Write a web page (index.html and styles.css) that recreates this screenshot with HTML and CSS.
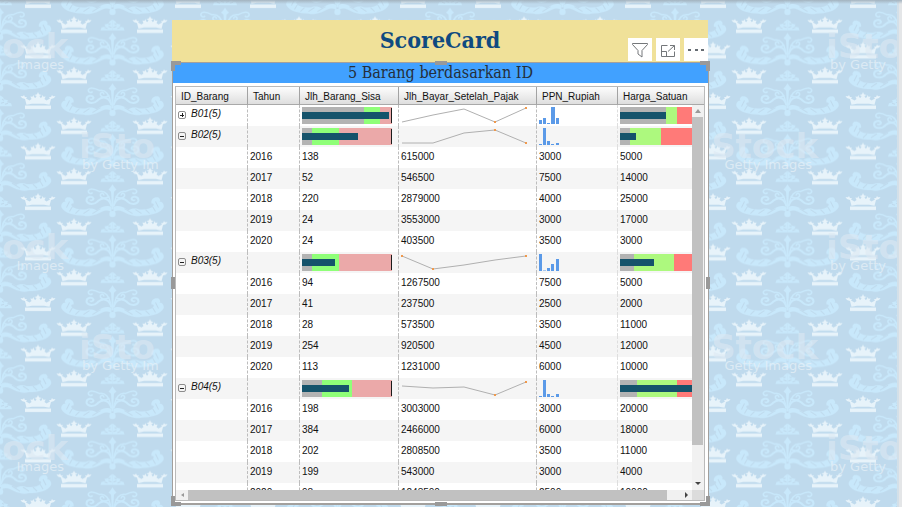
FILE: index.html
```html
<!DOCTYPE html>
<html lang="id">
<head>
<meta charset="utf-8">
<title>ScoreCard</title>
<link rel="stylesheet" href="styles.css">
</head>
<body>
<svg class="wallpaper" aria-hidden="true">
  <defs>
    <g id="crown">
      <path d="M-13 4.500H13V8H-13Z"/>
      <path d="M-11.500 3.600L-13 -2L-16 -3L-17.500 -5L-15 -4.600L-14 -6L-13 -4L-11 -4L-12 -2.400L-8.500 -.6L-6.500 -2L-7.600 -4.400L-5.500 -4.200L-4.600 -6L-3.800 -3.600L-2.600 -3L-1.400 -5L-3.600 -6L-1 -6.600L0 -9L1 -6.600L3.600 -6L1.400 -5L2.600 -3L3.800 -3.600L4.600 -6L5.500 -4.200L7.600 -4.400L6.500 -2L8.500 -.6L12 -2.400L11 -4L13 -4L14 -6L15 -4.600L17.500 -5L16 -3L13 -2L11.500 3.600L6 2.600H-6Z"/>
    </g>
    <g id="half">
      <path d="M1 3C5 0 9 2 13 4L16 6C20 3 24 4 27 5C31 5 35 5 39 3C42 1 42 -1 39 -1C38 -5 42 -8 46 -7C48 -5 48 -4 47 -3C50 -3 52 0 51 3C48 9 38 11 29 11C20 13 15 9 10 7C6 5 3 6 1 8Z"/>
      <path d="M1 2C3 -6 9 -8 14 -4C18 1 25 0 26 -4C26 -8 20 -9 19 -6C19 -4 22 -4 22 -5" fill="none" stroke="#c8e8fb" stroke-width="2"/>
      <path d="M2 -2C3 -9 7 -14 13 -13C17 -15 22 -17 24 -14C25 -11 21 -10 20 -12M3 -8C8 -5 13 -7 12 -10C11 -12 8 -11 9 -9" fill="none" stroke="#c8e8fb" stroke-width="1.500"/>
      <path d="M12 4L20 9M23 5L29 9M33 5L37 9M40 2L43 7M43 -3L46 3" fill="none" stroke="#bfdaed"/>
      <path d="M0 28H12L11 25L7 24L8 22L4 21L3 19L0 17Z"/>
      <path d="M1 25L4 24M5 26L8 25M2 21L4 22" fill="none" stroke="#bfdaed"/>
    </g>
    <g id="damask">
      <use href="#half"/><use href="#half" transform="scale(-1 1)"/>
      <circle cy="9.500" r="3.200"/>
      <path d="M0 -20L2 -17L4 -15L1.500 -13L1 -5V5H-1V-5L-1.500 -13L-4 -15L-2 -17Z"/>
    </g>
    <pattern id="tile" width="225" height="50.500" patternUnits="userSpaceOnUse">
      <g fill="#c8e8fb">
        <use href="#damask" x="112.500" y="2.500"/><use href="#damask" x="112.500" y="53"/>
        <use href="#damask" x="0" y="27.700"/><use href="#damask" x="225" y="27.700"/>
        <use href="#damask" x="0" y="-22.800"/><use href="#damask" x="225" y="-22.800"/>
      </g>
      <g fill="#e7f3fa">
        <use href="#crown" x="74" y="25"/><use href="#crown" x="150" y="25"/>
        <use href="#crown" x="38" y="0"/><use href="#crown" x="188" y="0"/>
        <use href="#crown" x="38" y="50.500"/><use href="#crown" x="188" y="50.500"/>
      </g>
    </pattern>
  </defs>
  <rect width="100%" height="100%" fill="url(#tile)"/>
  <g class="mark mark-end">
    <text x="68" y="58">ock</text><text class="by" x="64" y="69">Images</text>
    <text x="68" y="259">ock</text><text class="by" x="64" y="270">Images</text>
    <text x="68" y="460">ock</text><text class="by" x="64" y="471">Images</text>
    <text x="818" y="158">Stock</text><text class="by" x="812" y="169">Getty Images</text>
    <text x="818" y="359">Stock</text><text class="by" x="812" y="370">Getty Images</text>
  </g>
  <g class="mark">
    <text x="79" y="158">iSto</text><text class="by" x="82" y="169">by Getty Im</text>
    <text x="79" y="359">iSto</text><text class="by" x="82" y="370">by Getty Im</text>
    <text x="826" y="58">iSto</text><text class="by" x="830" y="69">by Getty</text>
    <text x="826" y="259">iSto</text><text class="by" x="830" y="270">by Getty</text>
    <text x="826" y="460">iSto</text><text class="by" x="830" y="471">by Getty</text>
  </g>
</svg>

<main class="report">
  <header class="banner">
    <h1>ScoreCard</h1>
    <div class="tools">
      <button type="button" aria-label="Filter"><svg width="24" height="24" viewBox="0 0 24 24"><path d="M4.500 5.500H19.500V6.500L14 12.500V19L10 16V12.500L4.500 6.500Z"/></svg></button>
      <button type="button" aria-label="Mode fokus"><svg width="24" height="24" viewBox="0 0 24 24"><path d="M11.500 7.500H5.500V18.500H18.500V13.500M5.500 13.500H10.500V18.500M12 13.500L18.500 7.500M14 7.500H18.500V12"/></svg></button>
      <button type="button" aria-label="Opsi lainnya"><svg width="24" height="24" viewBox="0 0 24 24"><path class="dots" d="M4 11h3v2H4zM11 11h3v2h-3zM17 11h3v2h-3z"/></svg></button>
    </div>
  </header>

  <section class="visual">
    <i class="grip tl"></i><i class="grip tr"></i><i class="grip bl"></i><i class="grip br"></i>
    <i class="grip top"></i><i class="grip bottom"></i><i class="grip left"></i><i class="grip right"></i>
    <h2>5 Barang berdasarkan ID</h2>
    <div class="grid-frame">
      <div class="viewport">
        <table>
          <colgroup><col class="c-id"><col class="c-year"><col class="c-left"><col class="c-pay"><col class="c-tax"><col></colgroup>
          <thead><tr><th>ID_Barang</th><th>Tahun</th><th>Jlh_Barang_Sisa</th><th>Jlh_Bayar_Setelah_Pajak</th><th>PPN_Rupiah</th><th>Harga_Satuan</th></tr></thead>
          <tbody>
            <tr class="group"><td><button type="button" class="toggle plus" aria-label="Buka B01"></button>B01(5)</td><td></td>
              <td><svg width="90" height="17"><path class="gray" d="M0 0H62V17H0z"/><path class="green" d="M62 0H78V17H62z"/><path class="pink" d="M78 0H90V17H78z"/><path class="value" d="M0 5H87V12H0z"/><path class="goal" d="M89 1H90V16H89z"/></svg></td>
              <td><svg width="130" height="17"><path class="line" d="M1 15L32 8L63 2L94 15L125 1"/><path class="dot" d="M93 14h2v2h-2zM124 0h2v2h-2z"/></svg></td>
              <td><svg width="24" height="17"><path class="bars" d="M0 13h3v4H0zM4 11h3v6H4zM8 16h3v1H8zM12 0h4v17h-4zM17 11h3v6h-3z"/></svg></td>
              <td><svg width="80" height="17"><path class="gray" d="M0 0H46V17H0z"/><path class="lime" d="M46 0H57V17H46z"/><path class="red" d="M57 0H80V17H57z"/><path class="value" d="M0 5H46V12H0z"/></svg></td></tr>
            <tr class="group"><td><button type="button" class="toggle" aria-label="Tutup B02"></button>B02(5)</td><td></td>
              <td><svg width="90" height="17"><path class="gray" d="M0 0H10V17H0z"/><path class="green" d="M10 0H37V17H10z"/><path class="pink" d="M37 0H90V17H37z"/><path class="value" d="M0 5H56V12H0z"/><path class="goal" d="M89 1H90V16H89z"/></svg></td>
              <td><svg width="130" height="17"><path class="line" d="M1 15H32L63 5L94 2L125 15"/><path class="dot" d="M93 1h2v2h-2zM124 14h2v2h-2z"/></svg></td>
              <td><svg width="24" height="17"><path class="bars" d="M0 16h3v1H0zM4 0h3v17H4zM8 13h3v4H8zM12 16h3v1h-3zM17 15h3v2h-3z"/></svg></td>
              <td><svg width="80" height="17"><path class="gray" d="M0 0H10V17H0z"/><path class="lime" d="M10 0H41V17H10z"/><path class="red" d="M41 0H80V17H41z"/><path class="value" d="M0 5H16V12H0z"/></svg></td></tr>
            <tr><td></td><td>2016</td><td>138</td><td>615000</td><td>3000</td><td>5000</td></tr>
            <tr><td></td><td>2017</td><td>52</td><td>546500</td><td>7500</td><td>14000</td></tr>
            <tr><td></td><td>2018</td><td>220</td><td>2879000</td><td>4000</td><td>25000</td></tr>
            <tr><td></td><td>2019</td><td>24</td><td>3553000</td><td>3000</td><td>17000</td></tr>
            <tr><td></td><td>2020</td><td>24</td><td>403500</td><td>3500</td><td>3000</td></tr>
            <tr class="group"><td><button type="button" class="toggle" aria-label="Tutup B03"></button>B03(5)</td><td></td>
              <td><svg width="90" height="17"><path class="gray" d="M0 0H10V17H0z"/><path class="green" d="M10 0H37V17H10z"/><path class="pink" d="M37 0H90V17H37z"/><path class="value" d="M0 5H33V12H0z"/><path class="goal" d="M89 1H90V16H89z"/></svg></td>
              <td><svg width="130" height="17"><path class="line" d="M1 2L32 15L63 11L94 6L125 2"/><path class="dot" d="M0 1h2v2H0zM31 14h2v2h-2zM124 1h2v2h-2z"/></svg></td>
              <td><svg width="24" height="17"><path class="bars" d="M0 0h3v17H0zM4 16.500h3v.5H4zM8 14h3v3H8zM12 10h3v7h-3zM17 5h3v12h-3z"/></svg></td>
              <td><svg width="80" height="17"><path class="gray" d="M0 0H14V17H0z"/><path class="lime" d="M14 0H54V17H14z"/><path class="red" d="M54 0H80V17H54z"/><path class="value" d="M0 5H34V12H0z"/></svg></td></tr>
            <tr><td></td><td>2016</td><td>94</td><td>1267500</td><td>7500</td><td>5000</td></tr>
            <tr><td></td><td>2017</td><td>41</td><td>237500</td><td>2500</td><td>2000</td></tr>
            <tr><td></td><td>2018</td><td>28</td><td>573500</td><td>3500</td><td>11000</td></tr>
            <tr><td></td><td>2019</td><td>254</td><td>920500</td><td>4500</td><td>12000</td></tr>
            <tr><td></td><td>2020</td><td>113</td><td>1231000</td><td>6000</td><td>10000</td></tr>
            <tr class="group"><td><button type="button" class="toggle" aria-label="Tutup B04"></button>B04(5)</td><td></td>
              <td><svg width="90" height="17"><path class="gray" d="M0 0H20V17H0z"/><path class="green" d="M20 0H50V17H20z"/><path class="pink" d="M50 0H90V17H50z"/><path class="value" d="M0 5H47V12H0z"/><path class="goal" d="M89 1H90V16H89z"/></svg></td>
              <td><svg width="130" height="17"><path class="line" d="M1 6L32 8L63 7L94 15L125 2"/><path class="dot" d="M93 14h2v2h-2zM124 1h2v2h-2z"/></svg></td>
              <td><svg width="24" height="17"><path class="bars" d="M0 16h3v1H0zM4 0h3v17H4zM8 14h3v3H8zM12 16h3v1h-3zM17 14h3v3h-3z"/></svg></td>
              <td><svg width="80" height="17"><path class="gray" d="M0 0H17V17H0z"/><path class="lime" d="M17 0H57V17H17z"/><path class="red" d="M57 0H80V17H57z"/><path class="value" d="M0 5H80V12H0z"/></svg></td></tr>
            <tr><td></td><td>2016</td><td>198</td><td>3003000</td><td>3000</td><td>20000</td></tr>
            <tr><td></td><td>2017</td><td>384</td><td>2466000</td><td>6000</td><td>18000</td></tr>
            <tr><td></td><td>2018</td><td>202</td><td>2808500</td><td>3500</td><td>11000</td></tr>
            <tr><td></td><td>2019</td><td>199</td><td>543000</td><td>3000</td><td>4000</td></tr>
            <tr><td></td><td>2020</td><td>98</td><td>1243500</td><td>2500</td><td>10000</td></tr>
          </tbody>
        </table>
        <div class="vscroll">
          <svg width="12" height="12"><path class="faint" d="M3 8L6 4L9 8z"/></svg>
          <div class="thumb"></div>
          <div class="track"></div>
          <svg width="12" height="12"><path d="M3 4H9L6 7z"/></svg>
        </div>
      </div>
      <div class="hscroll">
        <svg width="12" height="10"><path class="faint" d="M8 3V7L5 5z"/></svg>
        <div class="thumb"></div>
        <div class="track"></div>
        <svg width="12" height="10"><path d="M5 2V8L8 5z"/></svg>
        <div class="corner"></div>
      </div>
    </div>
  </section>
</main>
</body>
</html>
```
FILE: styles.css
```css
* { box-sizing: border-box; }

body {
  margin: 0;
  height: 100vh;
  overflow: hidden;
  background: #bfdaed;
  font-family: "Liberation Sans", Arial, sans-serif;
  display: grid;
  grid-template-columns: 172px minmax(0, 1fr) 193px;
  position: relative;
}
body::before {
  content: "";
  position: absolute;
  inset: 0 0 auto;
  height: 4px;
  z-index: 1;
  background: linear-gradient(#a3b3bf, rgba(191, 218, 237, 0));
}
body::after {
  content: "";
  position: absolute;
  inset: 0 0 0 auto;
  width: 5px;
  background: linear-gradient(90deg, #d3e0e9 2px, #e4e6e8 2px);
}

.wallpaper { position: absolute; inset: 0; width: 100%; height: 100%; }
.mark { font: bold 34px "DejaVu Sans", sans-serif; fill: #dde9f3; fill-opacity: .6; }
.mark .by { font-size: 13px; font-weight: normal; fill: #e6f0f7; fill-opacity: .75; }
.mark-end { text-anchor: end; }

.report {
  grid-column: 2;
  position: relative;
  display: flex;
  flex-direction: column;
  min-height: 0;
  padding: 20px 0 2px;
}

.banner { position: relative; height: 42px; margin-right: 1px; background: #f0e199; }
h1, h2 { margin: 0; font-family: "DejaVu Serif Condensed", "DejaVu Serif", serif; text-align: center; }
h1 { font-size: 23px; line-height: 39px; color: #0f4a80; }
.tools { position: absolute; right: 0; bottom: 1px; display: flex; gap: 4px; }
.tools button { width: 24px; height: 23px; padding: 0; border: 0; background: #fff; overflow: hidden; }
.tools svg { display: block; fill: none; stroke: #74777a; stroke-width: 1; }
.tools .dots { fill: #666c72; stroke: none; }

.visual {
  position: relative;
  flex: 1;
  min-height: 0;
  display: flex;
  flex-direction: column;
  background: #fff;
  border: 1px solid #a3a09d;
  border-width: 1px 1px 2px;
}
h2 { font-size: 16px; font-weight: normal; line-height: 20px; background: #41a1ff; color: #252f3a; }

.grip { position: absolute; border: 0 solid #999; }
.tl, .tr, .bl, .br { width: 10px; height: 10px; }
.tl { top: -2px; left: -2px; border-width: 4px 0 0 4px; }
.tr { top: -2px; right: -2px; border-width: 4px 4px 0 0; }
.bl { bottom: -3px; left: -2px; border-width: 0 0 4px 4px; }
.br { bottom: -3px; right: -2px; border-width: 0 4px 4px 0; }
.top, .bottom { left: calc(50% - 6px); width: 12px; border-top-width: 4px; }
.top { top: -2px; }
.bottom { bottom: -3px; }
.left, .right { top: calc(50% - 6px); height: 12px; border-left-width: 4px; }
.left { left: -2px; }
.right { right: -2px; }

.grid-frame {
  flex: 1;
  min-height: 0;
  margin: 3px 3px 2px 2px;
  display: flex;
  flex-direction: column;
  border: 1px solid #bababa;
}
.viewport { position: relative; flex: 1; min-height: 0; overflow: hidden; }
table { width: 100%; table-layout: fixed; border-collapse: separate; border-spacing: 0; font-size: 10px; line-height: 12px; color: #111; }
.c-id { width: 72px; }
.c-year { width: 52px; }
.c-left { width: 99px; }
.c-pay { width: 138px; }
.c-tax { width: 81px; }

th {
  height: 18px;
  padding: 2px 0 0 5px;
  font-weight: normal;
  text-align: left;
  white-space: nowrap;
  background: linear-gradient(#fdfdfd, #dedede);
  border-right: 1px solid #a3a3a3;
  border-bottom: 1px solid #a9a9a9;
}
th:last-child { border-right: 0; }
td { height: 21px; padding: 0 0 2px 2px; border-right: 1px dashed #bdbdbd; white-space: nowrap; }
td:last-child { border-right: 0; }
td:nth-child(5) { border-right-color: #dedede; }
tbody tr { background: #fff; }
tbody tr:nth-child(even) { background: #f5f5f5; }
.group td { padding-bottom: 0; }
.group td:first-child { padding-bottom: 3px; font-style: italic; }
td svg { display: block; }

.toggle {
  width: 8px;
  height: 8px;
  margin: 0 5px 0 0;
  padding: 0;
  vertical-align: -1px;
  border: 1px solid #8d8d8d;
  border-radius: 2px;
  background: linear-gradient(#222, #222) center / 4px 1px no-repeat;
}
.plus { background: linear-gradient(#222, #222) center / 4px 1px no-repeat, linear-gradient(#222, #222) center / 1px 4px no-repeat; }

.gray { fill: #b3b3b3; }
.green { fill: #8fff78; }
.pink { fill: #eba9a9; }
.lime { fill: #adf97e; }
.red { fill: #ff7a78; }
.value { fill: #15536b; }
.goal { fill: #1c1c1c; }
.bars { fill: #5b9ae8; }
.line { fill: none; stroke: #b0b0b0; }
.dot { fill: #f0994c; }

.vscroll {
  position: absolute;
  inset: 18px 0 0 auto;
  width: 12px;
  display: flex;
  flex-direction: column;
  background: #f1f1f1;
}
.hscroll { display: flex; height: 10px; background: #f1f1f1; }
.vscroll svg, .hscroll svg { flex: none; fill: #444; }
.vscroll .faint, .hscroll .faint { fill: #999; }
.thumb { flex: 10; background: #c1c1c1; }
.track { flex: 1; }
.vscroll .thumb { margin-right: 1px; }
.hscroll .thumb { flex: 37; }
.corner { width: 12px; background: #dcdcdc; }
```
